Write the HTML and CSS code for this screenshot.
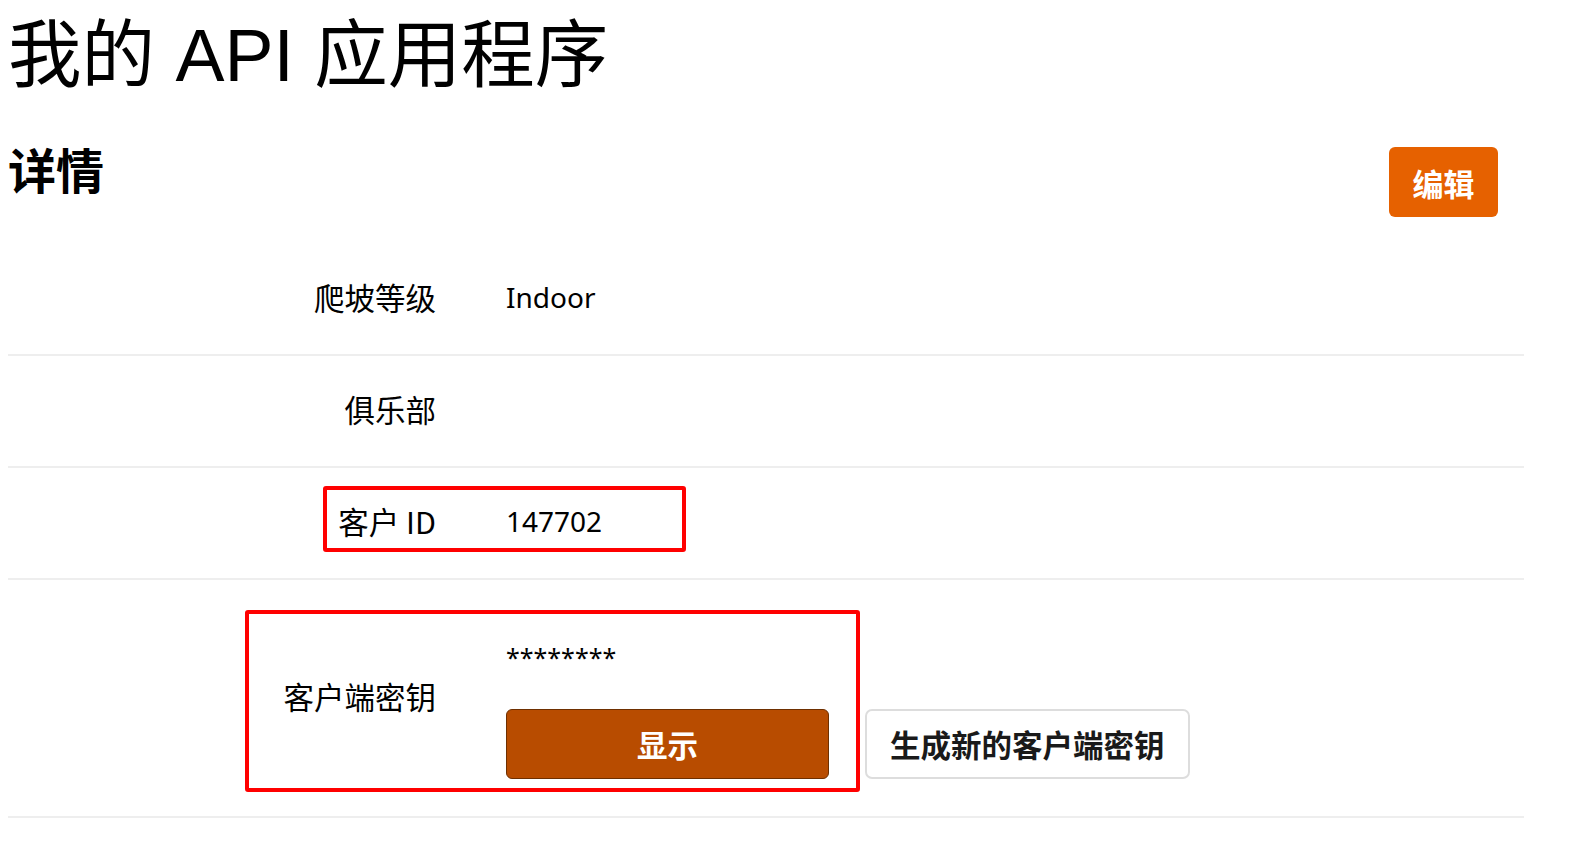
FILE: index.html
```html
<!DOCTYPE html>
<html lang="zh-CN">
<head>
<meta charset="utf-8">
<title>我的 API 应用程序</title>
<link rel="stylesheet" href="styles.css">
</head>
<body>
<main class="page">
  <h1 class="title">我的 API 应用程序</h1>
  <div class="section-head">
    <h2 class="section-title">详情</h2>
    <button class="btn btn-edit" type="button">编辑</button>
  </div>
  <div class="details">
    <div class="row">
      <div class="label">爬坡等级</div>
      <div class="value">Indoor</div>
    </div>
    <div class="row">
      <div class="label">俱乐部</div>
      <div class="value"></div>
    </div>
    <div class="row">
      <div class="label">客户 ID</div>
      <div class="value">147702</div>
      <div class="mark mark-id"></div>
    </div>
    <div class="row row-secret">
      <div class="label">客户端密钥</div>
      <div class="value value-secret">
        <div class="secret-col">
          <div class="secret">********</div>
          <button class="btn btn-show" type="button">显示</button>
        </div>
        <button class="btn btn-new" type="button">生成新的客户端密钥</button>
      </div>
      <div class="mark mark-secret"></div>
    </div>
  </div>
</main>
</body>
</html>
```
FILE: styles.css
```css
html, body {
  background: #ffffff;
}
body {
  margin: 8px;
  color: #000;
  font-family: "Noto Sans", "Noto Sans CJK SC", sans-serif;
}
.page {
  width: 1516px;
}
.title {
  margin: 0;
  font-family: "Liberation Sans", "Noto Sans CJK SC", sans-serif;
  font-weight: 400;
  font-size: 73.5px;
  line-height: 96px;
}
.section-head {
  display: flex;
  justify-content: space-between;
  align-items: flex-start;
  margin-top: 34px;
  padding-right: 26px;
}
.section-title {
  margin: 0;
  font-family: "Noto Sans CJK SC", sans-serif;
  font-size: 48px;
  font-weight: 700;
  line-height: 60px;
}
.btn {
  font-family: "Noto Sans CJK SC", sans-serif;
  font-weight: 700;
  font-size: 30.5px;
  cursor: pointer;
}
.btn-edit {
  margin-top: 9px;
  width: 109px;
  height: 70px;
  border: none;
  border-radius: 6px;
  background: #e66100;
  color: #fff;
  font-size: 31px;
}
.details {
  margin-top: 27px;
}
.row {
  position: relative;
  display: grid;
  grid-template-columns: 428px 1fr;
  column-gap: 70px;
  align-items: center;
  padding: 33px 0 37px;
  min-height: 40px;
  border-bottom: 2px solid #eeeeee;
  line-height: 40px;
}
.label {
  text-align: right;
  font-family: "Noto Sans CJK SC", sans-serif;
  font-size: 30.5px;
}
.value {
  font-family: "Noto Sans", "Noto Sans CJK SC", sans-serif;
  font-size: 28px;
}
.value-secret {
  display: flex;
  align-items: flex-end;
  gap: 36px;
}
.secret-col {
  display: flex;
  flex-direction: column;
  width: 323px;
}
.secret {
  margin-top: 24px;
  font-size: 25px;
  line-height: 40px;
}
.btn-show {
  margin-top: 32px;
  height: 70px;
  border: 1px solid #6e2f00;
  border-radius: 6px;
  background: #b84c00;
  color: #fff;
}
.btn-new {
  height: 70px;
  padding: 0 23px;
  border: 2px solid #dddddd;
  border-radius: 7px;
  background: #fff;
  color: #1a1a1a;
}
.mark {
  position: absolute;
  border: 4px solid #ff0000;
  border-radius: 3px;
  pointer-events: none;
}
.mark-id {
  left: 315px;
  top: 18px;
  width: 355px;
  height: 58px;
}
.mark-secret {
  left: 237px;
  top: 30px;
  width: 607px;
  height: 174px;
}
```
